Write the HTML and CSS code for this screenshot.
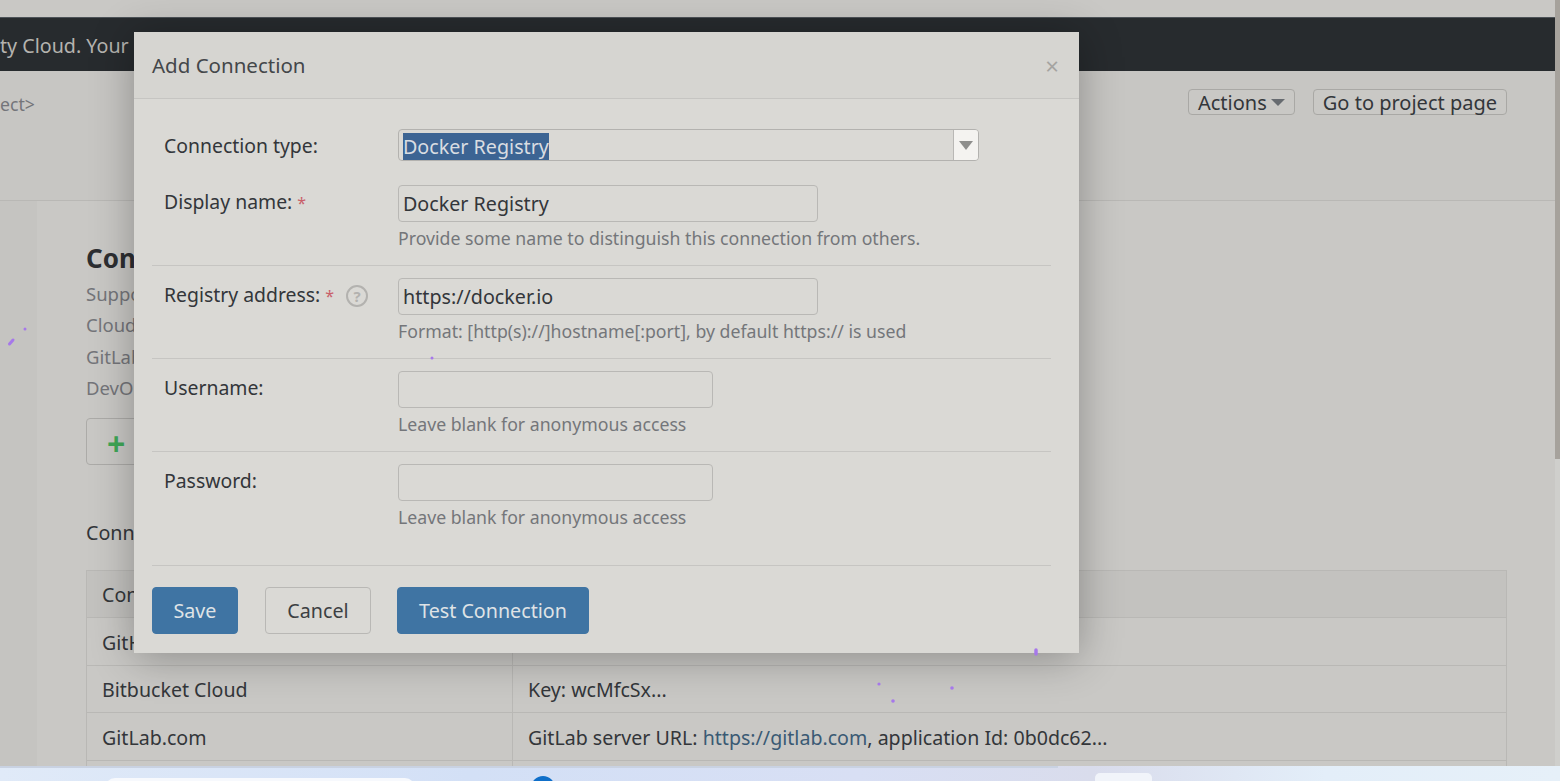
FILE: index.html
```html
<!DOCTYPE html>
<html lang="en">
<head>
    <meta charset="UTF-8">
    <title>Add Connection</title>
    <link rel="stylesheet" href="styles.css">
</head>
<body>
    <div class="screen">
        <div class="window">
            <div class="page">
                <div class="top-gap"></div>
                <div class="banner">ty Cloud. Your</div>
                <div class="project-bar">
                    <span class="crumb">ect&gt;</span>
                    <div class="project-actions">
                        <button class="btn-small" type="button">Actions <span class="caret"></span></button>
                        <button class="btn-small" type="button">Go to project page</button>
                    </div>
                </div>
                <div class="layout">
                    <div class="sidebar"></div>
                    <main class="content">
                        <h2>Connections</h2>
                        <p class="intro">Suppo</p>
                        <p class="intro">Cloud</p>
                        <p class="intro">GitLab</p>
                        <p class="intro">DevOps</p>
                        <button class="btn-add" type="button"><span class="plus">+</span> Add</button>
                        <p class="table-title">Connections</p>
                        <table>
                            <thead>
                                <tr><th>Conn</th><th></th></tr>
                            </thead>
                            <tbody>
                                <tr><td>GitHub</td><td></td></tr>
                                <tr><td>Bitbucket Cloud</td><td>Key: wcMfcSx...</td></tr>
                                <tr><td>GitLab.com</td><td>GitLab server URL: <a href="#">https://gitlab.com</a>, application Id: 0b0dc62...</td></tr>
                                <tr><td></td><td></td></tr>
                            </tbody>
                        </table>
                    </main>
                </div>
            </div>
            <div class="scrollbar"><div class="scroll-thumb"></div></div>

            <div class="modal">
                <div class="modal-header">
                    <h3>Add Connection</h3>
                    <span class="close">&times;</span>
                </div>
                <form class="modal-body">
                    <div class="row row-first">
                        <label>Connection type:</label>
                        <div class="select">
                            <span class="select-value">Docker Registry</span>
                            <span class="select-arrow"><span class="arrow-down"></span></span>
                        </div>
                    </div>
                    <div class="row">
                        <label>Display name: <span class="req">*</span></label>
                        <div>
                            <input class="input-wide" type="text" value="Docker Registry">
                            <div class="help">Provide some name to distinguish this connection from others.</div>
                        </div>
                    </div>
                    <div class="row">
                        <label>Registry address: <span class="req">*</span><span class="hint">?</span></label>
                        <div>
                            <input class="input-wide" type="text" value="https://docker.io">
                            <div class="help">Format: [http(s)://]hostname[:port], by default https:// is used</div>
                        </div>
                    </div>
                    <div class="row">
                        <label>Username:</label>
                        <div>
                            <input class="input-short" type="text">
                            <div class="help">Leave blank for anonymous access</div>
                        </div>
                    </div>
                    <div class="row row-last">
                        <label>Password:</label>
                        <div>
                            <input class="input-short" type="password">
                            <div class="help">Leave blank for anonymous access</div>
                        </div>
                    </div>
                </form>
                <div class="modal-footer">
                    <button class="btn btn-primary btn-save" type="button">Save</button>
                    <button class="btn btn-cancel" type="button">Cancel</button>
                    <button class="btn btn-primary btn-test" type="button">Test Connection</button>
                </div>
            </div>

            <svg class="specks" width="1560" height="781" viewBox="0 0 1560 781">
                <path d="M9.5 344 L13 340" stroke="#a678ea" stroke-width="3" stroke-linecap="round"/>
                <circle cx="25" cy="329" r="1.5" fill="#a678ea"/>
                <circle cx="432" cy="358" r="1.5" fill="#a678ea"/>
                <path d="M1036 650 L1036 654" stroke="#a678ea" stroke-width="3.5" stroke-linecap="round"/>
                <circle cx="879" cy="684" r="1.6" fill="#a678ea"/>
                <circle cx="893" cy="701" r="1.8" fill="#a678ea"/>
                <circle cx="952" cy="688" r="1.8" fill="#a678ea"/>
            </svg>
        </div>
        <div class="taskbar">
            <div class="taskbar-edge"></div>
            <div class="taskbar-items">
                <span class="task-search"></span>
                <span class="task-dot"></span>
                <span class="task-tile"></span>
            </div>
        </div>
    </div>
</body>
</html>
```

FILE: styles.css
```css
* {
    box-sizing: border-box;
}
html, body {
    margin: 0;
    padding: 0;
    height: 100%;
    overflow: hidden;
}
body {
    font-family: "Noto Sans", "Open Sans", sans-serif;
    font-size: 19.7px;
    color: #33363a;
    background-color: #c9c8c5;
}
button, input {
    font-family: inherit;
}
.screen {
    height: 100vh;
    display: flex;
    flex-direction: column;
}
.window {
    position: relative;
    flex: 1;
    min-height: 0;
    display: flex;
    overflow: hidden;
}
.page {
    flex: 1;
    min-width: 0;
    display: flex;
    flex-direction: column;
}
.top-gap {
    height: 17px;
    background-color: #c9c8c5;
}
.banner {
    height: 54px;
    line-height: 56px;
    background-color: #272b2e;
    border-top: 1px solid #4d5358;
    color: #b4b3af;
    white-space: nowrap;
}
.project-bar {
    height: 130px;
    padding: 18px 48px 0 0;
    display: flex;
    justify-content: space-between;
    align-items: flex-start;
    background-color: #c7c6c3;
    border-bottom: 1px solid #b9b8b5;
}
.crumb {
    font-size: 17.7px;
    color: #74757a;
    line-height: 30px;
}
.project-actions {
    display: flex;
    gap: 18px;
}
.btn-small {
    height: 26px;
    padding: 0 9px;
    display: flex;
    align-items: center;
    gap: 4px;
    font-size: 20px;
    color: #33363a;
    background-color: #c9c8c5;
    border: 1px solid #a9a8a5;
    border-radius: 4px;
}
.caret {
    width: 0;
    height: 0;
    border-left: 7px solid transparent;
    border-right: 7px solid transparent;
    border-top: 7px solid #676b70;
}
.layout {
    flex: 1;
    min-height: 0;
    display: flex;
    overflow: hidden;
}
.sidebar {
    width: 37px;
    background-color: #c5c4c1;
}
.content {
    flex: 1;
    min-width: 0;
    padding: 38px 48px 0 49px;
}
h2 {
    margin: 0 0 1px;
    font-size: 26px;
    line-height: 38px;
    font-weight: bold;
    color: #2d2f32;
}
.intro {
    margin: 0;
    font-size: 18.5px;
    line-height: 31.4px;
    color: #74757a;
}
.btn-add {
    display: block;
    width: 200px;
    height: 47px;
    margin-top: 14px;
    padding: 8px 0 0 20px;
    text-align: left;
    font-size: 19.7px;
    color: #33363a;
    background-color: #c9c8c5;
    border: 1px solid #acaba8;
    border-radius: 4px;
}
.plus {
    margin-right: 4px;
    color: #3fa757;
    font-size: 32px;
    font-weight: bold;
    line-height: 20px;
    vertical-align: -3px;
}
.table-title {
    margin: 53px 0 0;
    line-height: 30px;
}
table {
    width: 100%;
    margin-top: 22px;
    border-collapse: collapse;
    table-layout: fixed;
}
th, td {
    height: 47.5px;
    padding: 2px 15px 0;
    font-size: 19.6px;
    font-weight: normal;
    text-align: left;
    border: 1px solid #b9b8b5;
}
th:first-child, td:first-child {
    width: 426px;
}
th {
    background-color: #c3c2bf;
}
a {
    color: #3a5a74;
    text-decoration: none;
}
.scrollbar {
    width: 5px;
    background-color: #cfcfcc;
}
.scroll-thumb {
    height: 459px;
    background-color: #a6a29c;
}

/* dialog */
.modal {
    position: absolute;
    left: 134px;
    top: 32px;
    width: 945px;
    height: 621px;
    background-color: #dad9d5;
    box-shadow: 0 5px 40px rgba(0, 0, 0, 0.3);
}
.modal-header {
    height: 67px;
    padding: 0 20px 0 18px;
    display: flex;
    justify-content: space-between;
    align-items: center;
    background-color: #d6d5d1;
    border-bottom: 1px solid #c6c5c2;
}
h3 {
    margin: 0;
    font-size: 20.5px;
    font-weight: normal;
    color: #44474a;
}
.close {
    font-size: 24px;
    color: #a5a4a1;
}
.modal-body {
    height: 467px;
    margin: 0 28px 0 18px;
    padding-top: 18px;
    border-bottom: 1px solid #c6c5c2;
}
.row {
    display: grid;
    grid-template-columns: 234px 1fr;
    padding: 12px 12px 13px;
    border-bottom: 1px solid #c6c5c2;
}
.row-first {
    padding-bottom: 12px;
    border-bottom: none;
}
.row-first label {
    height: 32px;
    line-height: 33px;
}
.row-last {
    border-bottom: none;
}
label {
    font-size: 19.4px;
    line-height: 34px;
    color: #33363a;
}
.req {
    color: #c9606a;
    font-size: 16px;
}
.hint {
    display: inline-block;
    width: 22px;
    height: 22px;
    margin-left: 12px;
    line-height: 18px;
    text-align: center;
    font-size: 15px;
    font-weight: bold;
    color: #b3b2af;
    border: 2px solid #b3b2af;
    border-radius: 50%;
    vertical-align: 0;
}
.select {
    width: 581px;
    height: 32px;
    display: flex;
    justify-content: space-between;
    padding-left: 4px;
    border: 1px solid #b3b2af;
    border-radius: 4px;
    overflow: hidden;
}
.select-value {
    margin-top: 3px;
    height: 27px;
    line-height: 27px;
    color: #d9dde2;
    background-color: #3c6493;
}
.select-arrow {
    width: 25px;
    display: flex;
    align-items: center;
    justify-content: center;
    background-color: #f4f3f0;
    border-left: 1px solid #b9b8b5;
}
.arrow-down {
    width: 0;
    height: 0;
    border-left: 7px solid transparent;
    border-right: 7px solid transparent;
    border-top: 9px solid #8e8e8c;
}
input {
    display: block;
    height: 37px;
    padding: 0 4px;
    font-size: 19.7px;
    color: #33363a;
    background-color: #dad9d5;
    border: 1px solid #b9b8b5;
    border-radius: 4px;
}
.input-wide {
    width: 420px;
}
.input-short {
    width: 315px;
}
.help {
    margin-top: 2px;
    line-height: 28px;
    font-size: 17.7px;
    color: #74767a;
}
.modal-footer {
    padding: 21px 0 0 18px;
    display: flex;
}
.btn {
    height: 47px;
    padding: 0;
    font-size: 19.7px;
    border: 1px solid #b9b8b5;
    border-radius: 4px;
    color: #3c3f42;
    background-color: #dad9d5;
}
.btn-primary {
    color: #dfe3e6;
    background-color: #3f74a3;
    border-color: #3f74a3;
}
.btn-save {
    width: 86px;
    margin-right: 27px;
}
.btn-cancel {
    width: 106px;
    margin-right: 26px;
}
.btn-test {
    width: 192px;
}
.specks {
    position: absolute;
    left: 0;
    top: 0;
    pointer-events: none;
}

/* desktop strip at the bottom */
.taskbar {
    height: 15px;
    overflow: hidden;
    background: linear-gradient(90deg, #e0eaf8 0%, #d3e0f6 30%, #d8dff4 55%, #d9dcec 70%, #e3eef9 85%, #e6f0f9 100%);
}
.taskbar-edge {
    width: 1058px;
    height: 2px;
    background-color: #c9d2e2;
}
.taskbar-items {
    display: flex;
    align-items: flex-start;
}
.task-search {
    width: 310px;
    height: 20px;
    margin: 10px 0 0 105px;
    background-color: #f7f9fd;
    border-radius: 10px;
}
.task-dot {
    width: 24px;
    height: 24px;
    margin: 8px 0 0 116px;
    background-color: #0f6fc9;
    border-radius: 50%;
}
.task-tile {
    width: 57px;
    height: 20px;
    margin: 5px 0 0 540px;
    background-color: #f1f4fa;
    border-radius: 5px;
}
```
